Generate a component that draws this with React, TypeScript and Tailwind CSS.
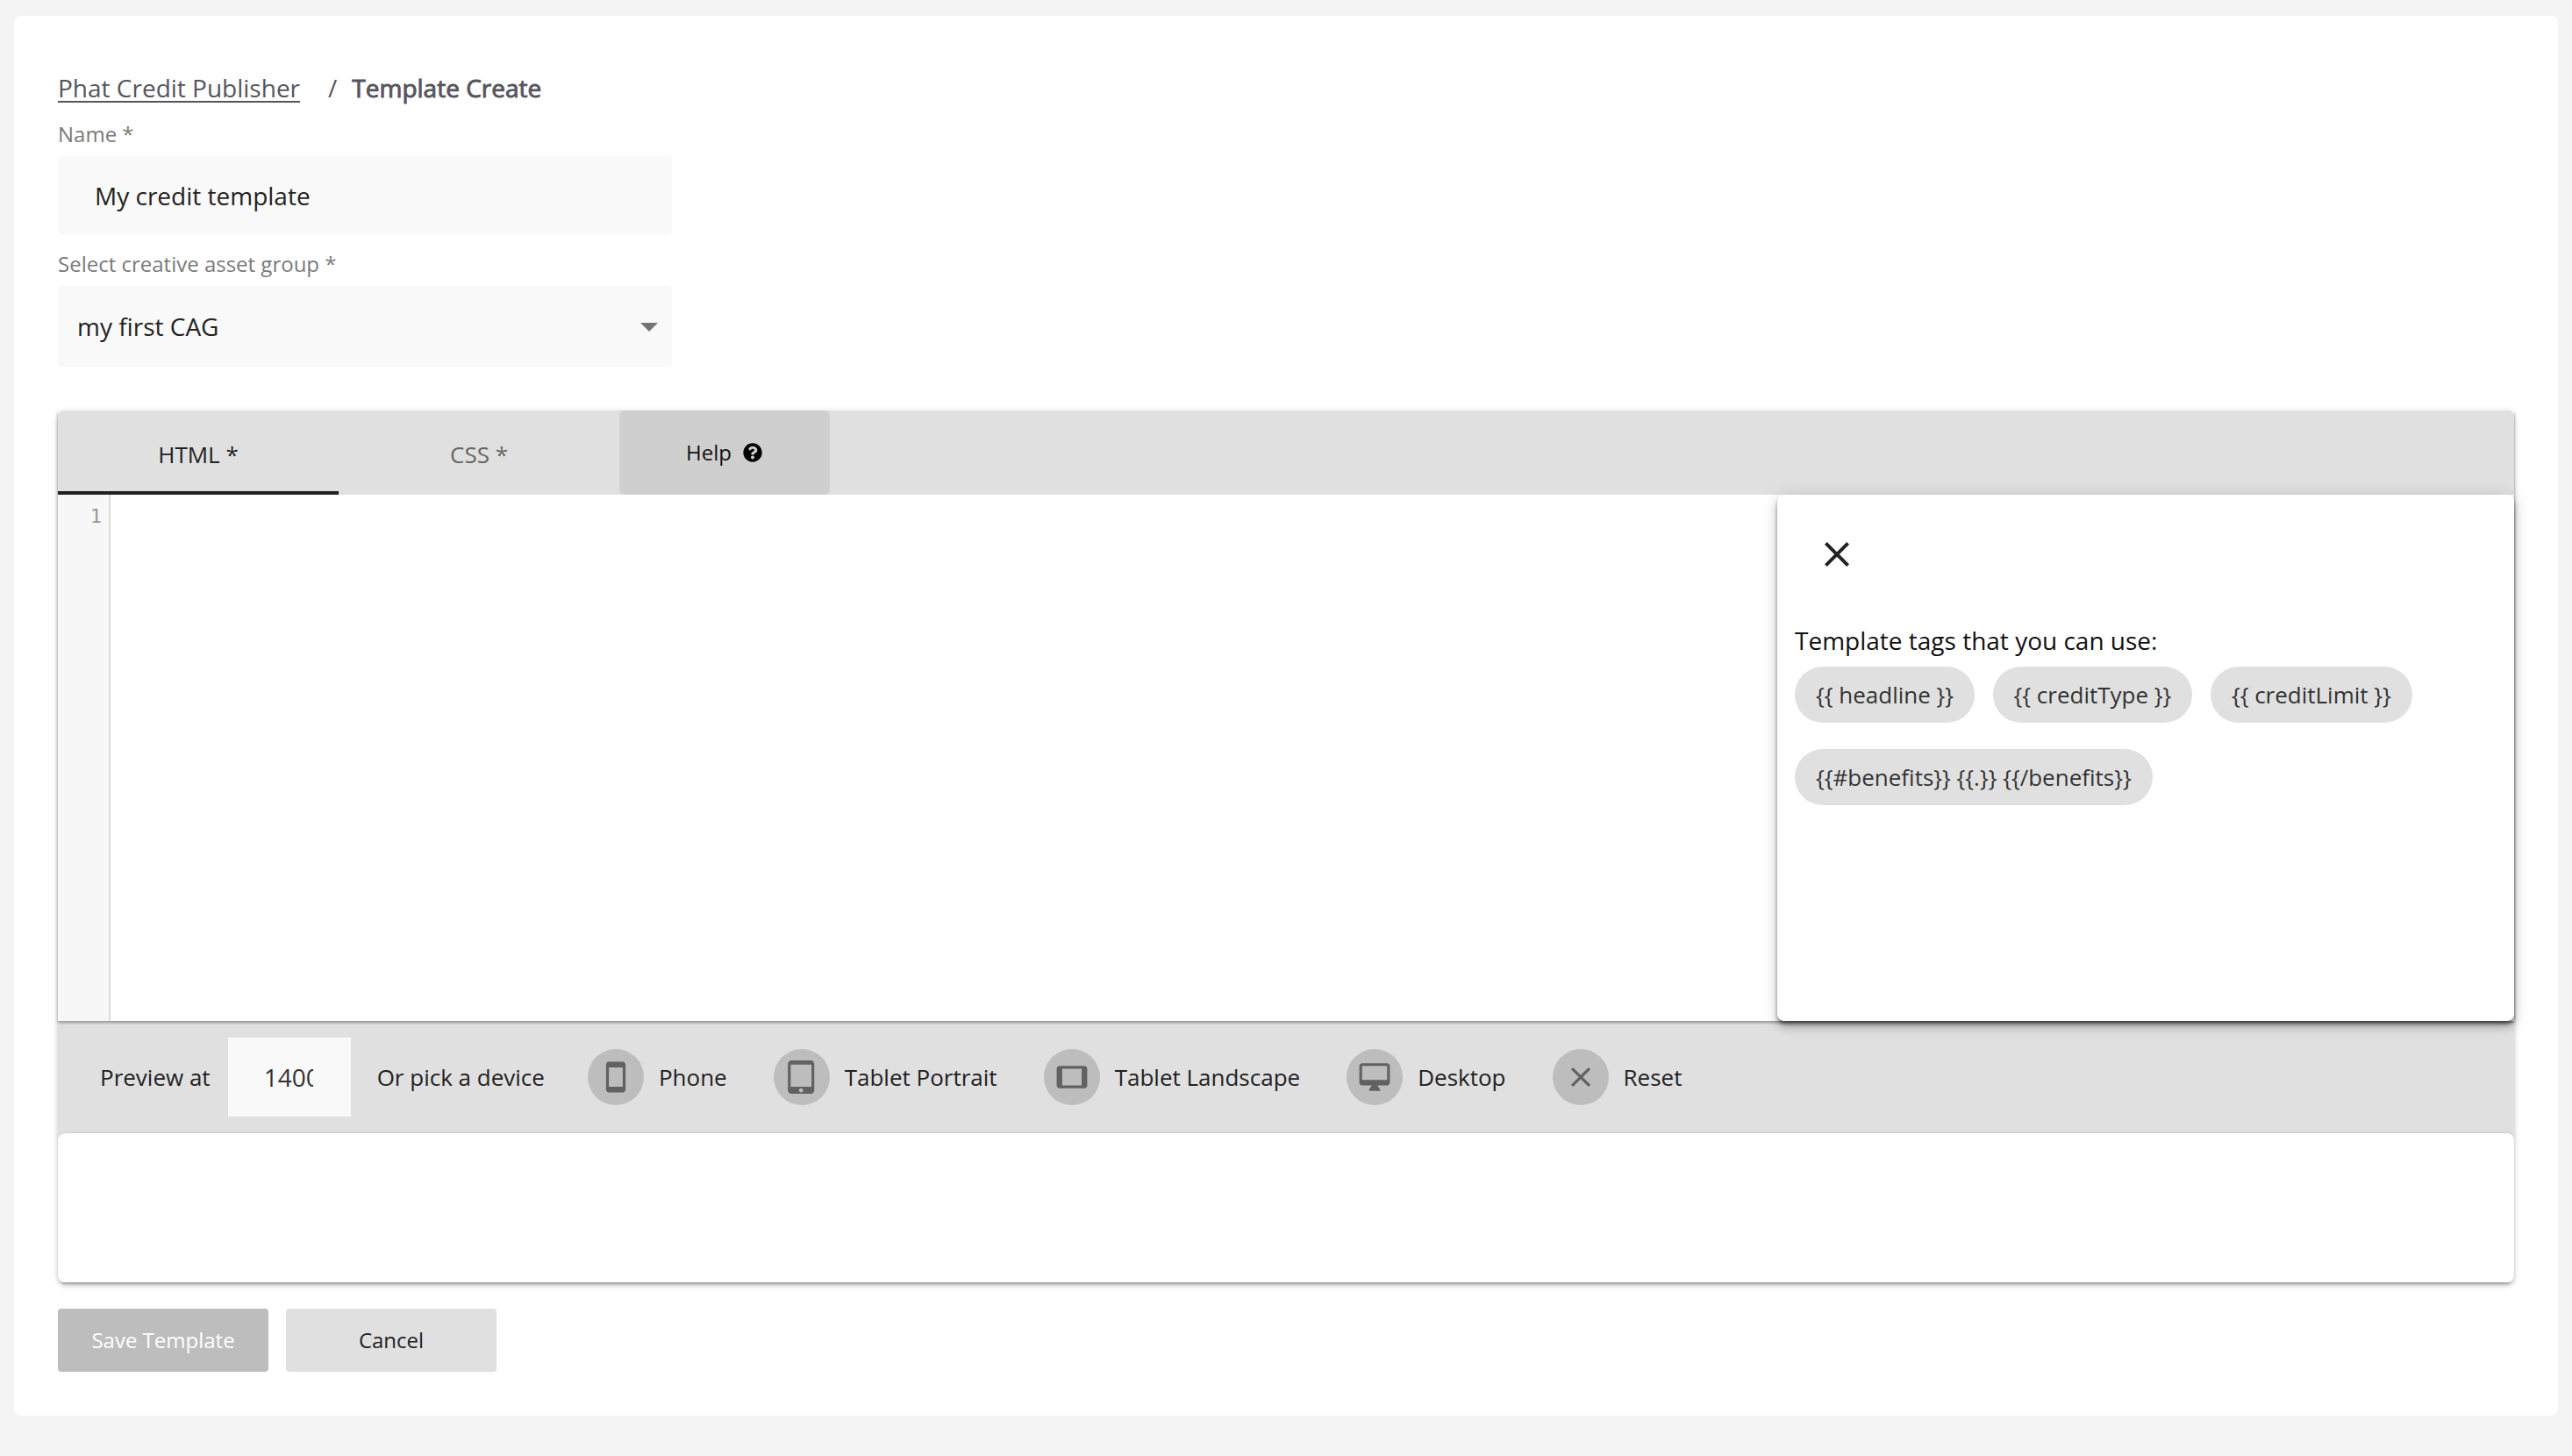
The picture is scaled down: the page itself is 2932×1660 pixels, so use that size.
import React from 'react'
import { FaQuestionCircle } from 'react-icons/fa'

const icons: Record<string, string> = {
  phone: 'M17 1.01L7 1c-1.1 0-2 .9-2 2v18c0 1.1.9 2 2 2h10c1.1 0 2-.9 2-2V3c0-1.1-.9-1.99-2-1.99zM17 19H7V5h10v14z',
  tablet: 'M18.5 0h-14C3.12 0 2 1.12 2 2.5v19C2 22.88 3.12 24 4.5 24h14c1.38 0 2.5-1.12 2.5-2.5v-19C21 1.12 19.88 0 18.5 0zm-7 23c-.83 0-1.5-.67-1.5-1.5s.67-1.5 1.5-1.5 1.5.67 1.5 1.5-.67 1.5-1.5 1.5zm7.5-4H4V3h15v16z',
  landscape: 'M21 4H3c-1.1 0-2 .9-2 2v12c0 1.1.9 2 2 2h18c1.1 0 1.99-.9 1.99-2L23 6c0-1.1-.9-2-2-2zm-2 14H5V6h14v12z',
  desktop: 'M21 2H3c-1.1 0-2 .9-2 2v12c0 1.1.9 2 2 2h7l-2 3v1h8v-1l-2-3h7c1.1 0 2-.9 2-2V4c0-1.1-.9-2-2-2zm0 12H3V4h18v10z',
  close: 'M19 6.41L17.59 5 12 10.59 6.41 5 5 6.41 10.59 12 5 17.59 6.41 19 12 13.41 17.59 19 19 17.59 13.41 12z',
}

const Icon = ({ name, className }: { name: string; className: string }) => (
  <svg viewBox="0 0 24 24" className={className} fill="currentColor">
    <path d={icons[name]} />
  </svg>
)

const devices = [
  { icon: 'phone', label: 'Phone' },
  { icon: 'tablet', label: 'Tablet Portrait' },
  { icon: 'landscape', label: 'Tablet Landscape' },
  { icon: 'desktop', label: 'Desktop' },
  { icon: 'close', label: 'Reset' },
]

const tags = ['{{ headline }}', '{{ creditType }}', '{{ creditLimit }}', '{{#benefits}} {{.}} {{/benefits}}']

const App = () => {
  return (
    <div className="h-[1660px] bg-[#f4f4f4] pt-[18px] px-[16px] font-['Open_Sans',sans-serif]">
      <div className="h-[1596px] rounded-[8px] bg-white px-[50px] pt-[60px]">
        {/* breadcrumb */}
        <div className="flex h-[44px] items-center text-[28px] text-[#55555e]">
          <a className="underline underline-offset-[4px]">Phat Credit Publisher</a>
          <span className="ml-[32px]">/</span>
          <span className="ml-[17px] [-webkit-text-stroke:0.9px_#55555e]">Template Create</span>
        </div>

        <label className="mt-[19px] block h-[24px] text-[24px] leading-[24px] text-[#7a7a7a]">Name *</label>
        <div className="mt-[13px] flex h-[90px] w-[700px] items-center rounded-[4px] bg-[#f9f9f9] pl-[42px] text-[28px] text-[#222222]">
          My credit template
        </div>

        <label className="mt-[21px] block h-[24px] text-[24px] leading-[24px] text-[#7a7a7a]">Select creative asset group *</label>
        <div className="relative mt-[13px] flex h-[92px] w-[700px] items-center rounded-[4px] bg-[#f9f9f9] pl-[22px] text-[28px] text-[#222222]">
          my first CAG
          <svg viewBox="0 0 24 24" className="absolute right-[2px] top-[22px] h-[48px] w-[48px]" fill="#757575">
            <path d="M7 10l5 5 5-5z" />
          </svg>
        </div>

        {/* editor */}
        <div className="relative mt-[50px] w-[2800px] rounded-[8px] bg-[#e0e0e0] shadow-[0_4px_4px_rgba(0,0,0,0.14),0_2px_10px_rgba(0,0,0,0.12),0_6px_2px_-4px_rgba(0,0,0,0.2)]">
          <div className="relative z-10 shadow-[0_2px_3px_rgba(0,0,0,0.35)]">
            <div className="flex h-[96px] rounded-t-[6px] bg-[#e0e0e0]">
              <div className="flex w-[320px] items-center justify-center border-b-[4px] border-[#212121] pt-[8px] text-[26px] text-[#222222]">HTML *</div>
              <div className="flex w-[320px] items-center justify-center pt-[4px] text-[26px] text-[#666666]">CSS *</div>
              <div className="flex w-[240px] items-center gap-[13px] rounded-[6px] bg-[#cfcfcf] pl-[76px] text-[24px] text-[#111111]">
                Help
                <FaQuestionCircle className="h-[22px] w-[22px] text-black" />
              </div>
            </div>
            <div className="flex h-[600px] bg-white">
              <div className="w-[60px] border-r-2 border-[#dddddd] bg-[#f7f7f7] pr-[8px] pt-[8px] text-right font-['DejaVu_Sans_Mono',monospace] text-[22px] text-[#999999]">1</div>
            </div>

            {/* help panel */}
            <div className="absolute right-0 top-[96px] h-[600px] w-[840px] rounded-[8px] bg-white pl-[20px] shadow-[0_4px_5px_-1px_rgba(0,0,0,0.55),0_8px_10px_rgba(0,0,0,0.14),0_2px_20px_rgba(0,0,0,0.15)]">
              <Icon name="close" className="ml-[24px] mt-[44px] h-[48px] w-[48px] text-[#222222]" />
              <p className="mt-[55px] text-[28px] leading-[38px] text-[#111111]">Template tags that you can use:</p>
              <div className="mt-[11px] flex w-[800px] flex-wrap gap-x-[20.5px] gap-y-[30px]">
                {tags.map((tag) => (
                  <span key={tag} className="flex h-[64px] items-center rounded-full bg-[#e0e0e0] px-[24px] text-[26px] text-[#333333]">
                    {tag}
                  </span>
                ))}
              </div>
            </div>
          </div>

          {/* preview bar */}
          <div className="flex h-[128px] items-center bg-[#e0e0e0] pl-[48px] text-[26px] text-[#222222]">
            <span>Preview at</span>
            <input
              readOnly
              value="1400"
              className="ml-[20px] h-[90px] w-[140px] bg-[#f9f9f9] pl-[41px] pr-[43px] text-[28px] text-[#333333] outline-none"
            />
            <span className="ml-[30px]">Or pick a device</span>
            <div className="ml-[49px] flex gap-[53px]">
              {devices.map((d) => (
                <div key={d.label} className="flex items-center gap-[17px]">
                  <span className="flex h-[64px] w-[64px] items-center justify-center rounded-full bg-[#bdbdbd]">
                    <Icon name={d.icon} className="h-[38px] w-[38px] text-[#616161]" />
                  </span>
                  {d.label}
                </div>
              ))}
            </div>
          </div>

          {/* preview frame */}
          <div className="relative h-[170px] rounded-[8px] bg-white shadow-[0_-1px_2px_rgba(0,0,0,0.1)]" />
        </div>

        <div className="mt-[30px] flex gap-[20px] text-[24px]">
          <button className="h-[72px] w-[240px] rounded-[4px] bg-[#bdbdbd] text-white">Save Template</button>
          <button className="h-[72px] w-[240px] rounded-[4px] bg-[#e0e0e0] text-[#222222]">Cancel</button>
        </div>
      </div>
    </div>
  )
}

export default App
